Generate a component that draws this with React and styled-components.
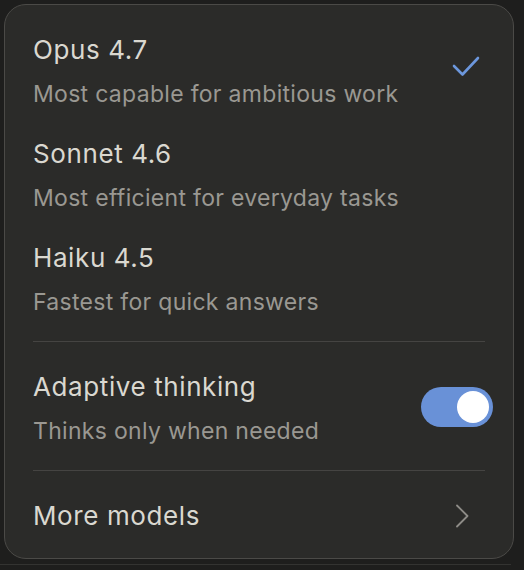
import React from 'react'
import styled, { createGlobalStyle } from 'styled-components'

const Global = createGlobalStyle`
  html, body {
    margin: 0;
    padding: 0;
    background: #1e1e1d;
  }
  body {
    font-family: Inter, "Noto Sans", sans-serif;
    -webkit-font-smoothing: antialiased;
  }
`

const Backdrop = styled.div`
  width: 511px;
  height: 565px;
  padding: 4px 0 0 4px;
  box-sizing: border-box;
  border-bottom: 1px solid #333331;
`

const Menu = styled.div`
  width: 510px;
  height: 555px;
  box-sizing: border-box;
  padding: 27px 28px 24px;
  background: #2b2b29;
  border: 1px solid #4b4a47;
  border-radius: 22px;
  display: flex;
  flex-direction: column;
`

const Models = styled.div`
  display: flex;
  flex-direction: column;
  gap: 24px;
`

const Row = styled.div`
  display: flex;
  align-items: center;
  justify-content: space-between;
`

const Text = styled.div`
  display: flex;
  flex-direction: column;
  gap: 8px;
`

const Title = styled.div`
  font-size: 26px;
  line-height: 36px;
  color: #dad8d0;
  letter-spacing: 0.6px;
`

const Sub = styled.div`
  font-size: 23px;
  line-height: 36px;
  color: #9a9892;
  letter-spacing: 0.3px;
`

const Divider = styled.hr`
  border: 0;
  height: 1px;
  background: #454442;
  margin: 21px 0 27px;
`

const Check = styled.svg`
  width: 28px;
  height: 22px;
  margin: 0 5px 13px 0;
  flex-shrink: 0;
`

const Switch = styled.div`
  width: 72px;
  height: 40px;
  border-radius: 20px;
  background: ${p => (p.$on ? '#6991d7' : '#55544f')};
  display: flex;
  justify-content: ${p => (p.$on ? 'flex-end' : 'flex-start')};
  align-items: center;
  padding: 0 4px;
  box-sizing: border-box;
  margin: 0 -8px 4px 0;
`

const Knob = styled.div`
  width: 32px;
  height: 32px;
  border-radius: 50%;
  background: #ffffff;
`

const Chevron = styled.svg`
  width: 14px;
  height: 24px;
  margin-right: 16px;
`

const models = [
  { name: 'Opus 4.7', desc: 'Most capable for ambitious work', selected: true },
  { name: 'Sonnet 4.6', desc: 'Most efficient for everyday tasks' },
  { name: 'Haiku 4.5', desc: 'Fastest for quick answers' },
]

export default function App() {
  return (
    <>
      <Global />
      <Backdrop>
        <Menu>
          <Models>
            {models.map(m => (
              <Row key={m.name}>
                <Text>
                  <Title>{m.name}</Title>
                  <Sub>{m.desc}</Sub>
                </Text>
                {m.selected && (
                  <Check viewBox="0 0 28 22">
                    <polyline
                      points="2,11 10.5,19.5 26,3"
                      fill="none"
                      stroke="#6c97dc"
                      strokeWidth="2.6"
                      strokeLinecap="round"
                      strokeLinejoin="round"
                    />
                  </Check>
                )}
              </Row>
            ))}
          </Models>
          <Divider />
          <Row>
            <Text>
              <Title>Adaptive thinking</Title>
              <Sub>Thinks only when needed</Sub>
            </Text>
            <Switch $on>
              <Knob />
            </Switch>
          </Row>
          <Divider />
          <Row>
            <Title>More models</Title>
            <Chevron viewBox="0 0 14 24">
              <polyline
                points="2,1.5 12.5,12 2,22.5"
                fill="none"
                stroke="#8e8c87"
                strokeWidth="1.8"
                strokeLinecap="round"
                strokeLinejoin="round"
              />
            </Chevron>
          </Row>
        </Menu>
      </Backdrop>
    </>
  )
}
